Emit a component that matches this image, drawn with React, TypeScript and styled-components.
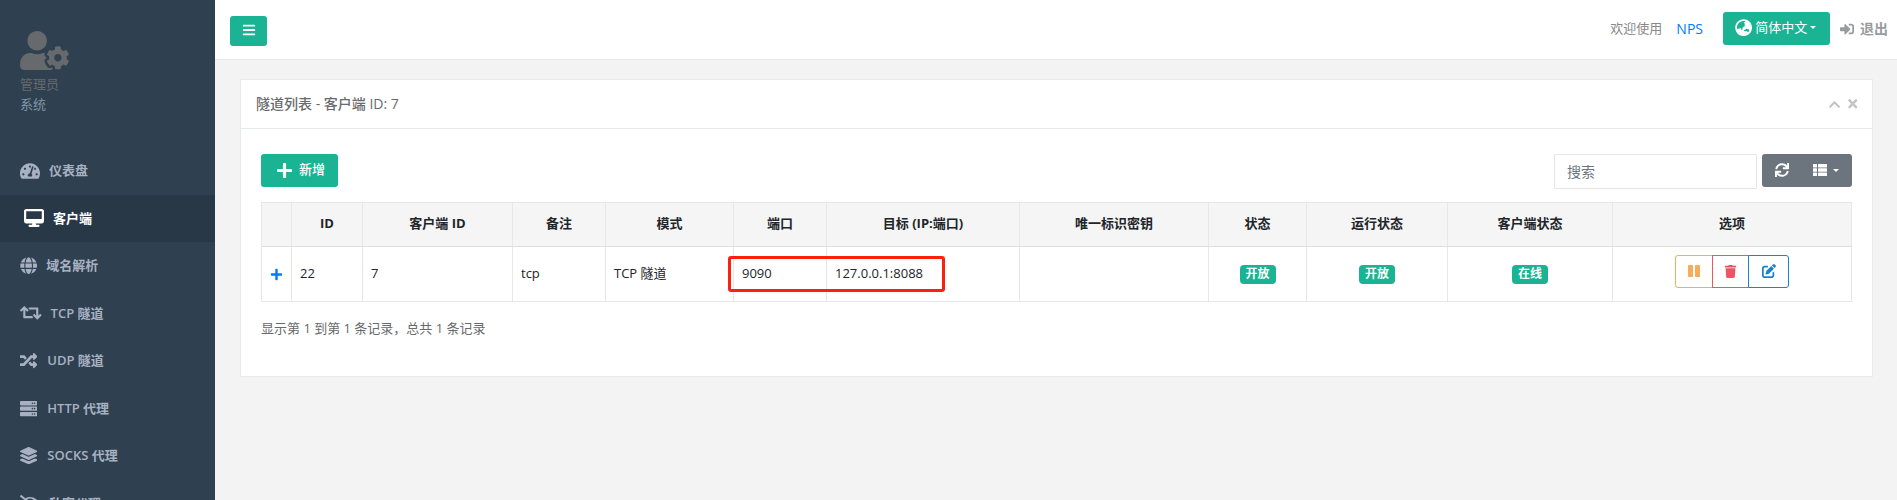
import React from 'react';
import styled, { createGlobalStyle } from 'styled-components';
import {
  FaUserCog, FaTachometerAlt, FaGlobe, FaRetweet, FaRandom, FaServer, FaLayerGroup,
  FaEyeSlash, FaBars, FaGlobeAsia, FaSignInAlt, FaSync, FaTrash,
  FaPlus, FaChevronUp, FaTimes,
} from 'react-icons/fa';
import { FaDesktop, FaPenToSquare } from 'react-icons/fa6';

const Global = createGlobalStyle`
  *, *::before, *::after { box-sizing: border-box; }
  html, body { margin: 0; height: 500px; overflow: hidden; }
  body {
    font-family: "Open Sans", "Noto Sans CJK SC", sans-serif;
    font-size: 13px;
    line-height: 19.5px;
    color: #676a6c;
    background: #f3f3f3;
  }
  svg { display: block; flex: none; }
`;

const Page = styled.div`
  display: flex;
  height: 500px;
  overflow: hidden;
`;

const Sidebar = styled.nav`
  width: 215px;
  flex: none;
  background: #2f4050;
  overflow: hidden;
`;

const Profile = styled.div`
  height: 147px;
  padding: 31px 20px 0;
  color: #676a6c;
`;

const ProfileName = styled.div`
  margin-top: 5px;
`;

const ProfileRole = styled.div`
  color: #8095a8;
`;

const MenuItem = styled.a<{ $active?: boolean }>`
  display: flex;
  align-items: center;
  height: 47.5px;
  padding-left: ${p => (p.$active ? 24 : 20)}px;
  font-weight: 600;
  color: ${p => (p.$active ? '#fff' : '#a7b1c2')};
  background: ${p => (p.$active ? '#293846' : 'transparent')};
`;

const MenuLabel = styled.span<{ $gap: number }>`
  margin-left: ${p => p.$gap}px;
`;

const Main = styled.main`
  flex: 1;
  min-width: 0;
`;

const TopBar = styled.header`
  display: flex;
  justify-content: space-between;
  height: 60px;
  padding: 0 9px 0 15px;
  background: #fff;
  border-bottom: 1px solid #e7eaec;
`;

const MenuToggle = styled.button`
  display: flex;
  justify-content: center;
  width: 37px;
  height: 30px;
  margin: 16px 0 0;
  padding: 7px 0 0;
  border: 0;
  border-radius: 3px;
  color: #fff;
  background: #1ab394;
`;

const TopRight = styled.div`
  display: flex;
  align-items: flex-start;
`;

const Welcome = styled.span`
  margin-top: 19px;
  color: #888;
`;

const Brand = styled.a`
  margin: 19px 20px 0 14px;
  font-size: 14px;
  color: #007bff;
`;

const LanguageButton = styled.button`
  display: flex;
  align-items: center;
  width: 107px;
  height: 33px;
  margin: 12px 10px 0 0;
  padding: 0 0 2px 12px;
  border: 0;
  border-radius: 3px;
  font: inherit;
  color: #fff;
  background: #1ab394;
`;

const LanguageName = styled.span`
  margin: 0 3px;
`;

const Caret = styled.span`
  border: 3px solid transparent;
  border-top-color: currentColor;
  border-bottom: 0;
`;

const Logout = styled.a`
  display: flex;
  align-items: center;
  gap: 6px;
  margin-top: 19px;
  font-size: 14px;
  font-weight: 600;
  color: #999c9e;
`;

const Panel = styled.section`
  height: 298px;
  margin: 19px 24px 0 25px;
  border: 1px solid #e7eaec;
  background: #fff;
`;

const PanelHead = styled.div`
  display: flex;
  align-items: center;
  justify-content: space-between;
  height: 49px;
  padding: 0 13px 0 15px;
  border-bottom: 1px solid #e7eaec;
  font-size: 14px;
  font-weight: 500;
`;

const PanelTools = styled.div`
  display: flex;
  align-items: center;
  gap: 5px;
  color: #c4c4c4;
`;

const PanelBody = styled.div`
  padding: 25px 20px 0;
`;

const Toolbar = styled.div`
  display: flex;
  justify-content: space-between;
  height: 48px;
`;

const AddButton = styled.button`
  display: flex;
  align-items: center;
  gap: 6px;
  width: 77px;
  height: 33px;
  padding: 0 0 1px 15px;
  border: 0;
  border-radius: 3px;
  font: inherit;
  font-weight: 500;
  color: #fff;
  background: #1ab394;
`;

const ToolbarRight = styled.div`
  display: flex;
  gap: 5px;
`;

const Search = styled.input`
  width: 203px;
  height: 35px;
  padding: 0 12px;
  border: 1px solid #e5e6e7;
  border-radius: 1px;
  font: inherit;
  font-size: 14px;
  &::placeholder { color: #6c757d; opacity: 1; }
`;

const ToolButtons = styled.div`
  display: flex;
  align-items: center;
  width: 90px;
  height: 33px;
  padding: 0 13px 1px;
  border-radius: 3px;
  color: #fff;
  background: #6c757d;
`;

const ColumnsToggle = styled.span`
  display: flex;
  align-items: center;
  gap: 6px;
  margin-left: 24px;
`;

const TableWrap = styled.div`
  position: relative;
`;

const Table = styled.table`
  width: 1591px;
  table-layout: fixed;
  border-collapse: separate;
  border-spacing: 0;
  border: 1px solid #e7e7e7;
  border-width: 1px 0 0 1px;
  color: #212529;
`;

const HeadCell = styled.th`
  height: 44px;
  padding: 0 0 1px;
  border-right: 1px solid #e7e7e7;
  border-bottom: 1px solid #ddd;
  background: #f5f5f6;
  text-align: center;
  font-weight: 700;
`;

const Cell = styled.td<{ $center?: boolean }>`
  height: 55px;
  padding: ${p => (p.$center ? '0' : '0 8px')};
  border-right: 1px solid #e7e7e7;
  border-bottom: 1px solid #e7e7e7;
  vertical-align: middle;
  text-align: ${p => (p.$center ? 'center' : 'left')};
`;

const ExpandLink = styled.a`
  display: flex;
  justify-content: center;
  padding-right: 1px;
  color: #007bff;
`;

const Badge = styled.span`
  display: inline-block;
  width: 36px;
  height: 19px;
  border-radius: 4px;
  font-size: 12px;
  line-height: 17px;
  font-weight: 700;
  color: #fff;
  background: #1ab394;
  vertical-align: middle;
`;

const Actions = styled.div`
  display: flex;
  justify-content: center;
  margin: 0 0 5px 1px;
`;

const ActionButton = styled.button<{ $color: string; $width: number }>`
  display: flex;
  align-items: center;
  justify-content: center;
  width: ${p => p.$width}px;
  height: 33px;
  margin-left: -1px;
  padding: 0 0 1px;
  border: 1px solid ${p => p.$color};
  color: ${p => p.$color};
  background: #fff;
  &:first-child { border-radius: 3px 0 0 3px; }
  &:last-child { border-radius: 0 3px 3px 0; }
`;

const Highlight = styled.div`
  position: absolute;
  left: 467px;
  top: 54px;
  width: 217px;
  height: 36px;
  border: 3px solid #ff1f0f;
  border-radius: 3px;
`;

const Summary = styled.div`
  margin-top: 17px;
`;

const PauseIcon = () => (
  <svg width="12" height="12" viewBox="0 0 12 12" fill="currentColor">
    <rect width="5" height="12" rx="0.8" />
    <rect x="7" width="5" height="12" rx="0.8" />
  </svg>
);

const ListIcon = () => (
  <svg width="14" height="12" viewBox="0 0 14 12" fill="currentColor">
    {[0, 4.3, 8.6].map(y => (
      <React.Fragment key={y}>
        <rect y={y} width="4" height="3.4" rx="0.5" />
        <rect x="5" y={y} width="9" height="3.4" rx="0.5" />
      </React.Fragment>
    ))}
  </svg>
);

const menu = [
  { label: '仪表盘', icon: FaTachometerAlt, size: 20, gap: 9 },
  { label: '客户端', icon: FaDesktop, size: 20, gap: 9, active: true },
  { label: '域名解析', icon: FaGlobe, size: 17.3, gap: 9 },
  { label: 'TCP 隧道', icon: FaRetweet, size: 21.6, gap: 9 },
  { label: 'UDP 隧道', icon: FaRandom, size: 17.3, gap: 10 },
  { label: 'HTTP 代理', icon: FaServer, size: 17.3, gap: 10 },
  { label: 'SOCKS 代理', icon: FaLayerGroup, size: 17.3, gap: 10 },
  { label: '私密代理', icon: FaEyeSlash, size: 20, gap: 9 },
];

const columns: [string, number][] = [
  ['', 30], ['ID', 71], ['客户端 ID', 150], ['备注', 93], ['模式', 128], ['端口', 93],
  ['目标 (IP:端口)', 193], ['唯一标识密钥', 189], ['状态', 98], ['运行状态', 141],
  ['客户端状态', 165], ['选项', 239],
];

export default function App() {
  return (
    <Page>
      <Global />
      <Sidebar>
        <Profile>
          <FaUserCog style={{ width: 49, height: 39 }} />
          <ProfileName>管理员</ProfileName>
          <ProfileRole>系统</ProfileRole>
        </Profile>
        {menu.map(({ label, icon: Icon, size, gap, active }) => (
          <MenuItem key={label} $active={active}>
            <Icon size={size} />
            <MenuLabel $gap={gap}>{label}</MenuLabel>
          </MenuItem>
        ))}
      </Sidebar>
      <Main>
        <TopBar>
          <MenuToggle><FaBars size={14} /></MenuToggle>
          <TopRight>
            <Welcome>欢迎使用</Welcome>
            <Brand>NPS</Brand>
            <LanguageButton>
              <FaGlobeAsia size={17.3} />
              <LanguageName>简体中文</LanguageName>
              <Caret />
            </LanguageButton>
            <Logout><FaSignInAlt size={14} />退出</Logout>
          </TopRight>
        </TopBar>
        <Panel>
          <PanelHead>
            隧道列表 - 客户端 ID: 7
            <PanelTools><FaChevronUp size={13} /><FaTimes size={13.5} /></PanelTools>
          </PanelHead>
          <PanelBody>
            <Toolbar>
              <AddButton><FaPlus size={17} />新增</AddButton>
              <ToolbarRight>
                <Search placeholder="搜索" />
                <ToolButtons>
                  <FaSync size={14} />
                  <ColumnsToggle><ListIcon /><Caret /></ColumnsToggle>
                </ToolButtons>
              </ToolbarRight>
            </Toolbar>
            <TableWrap>
              <Table>
                <colgroup>
                  {columns.map(([name, width]) => <col key={name} style={{ width }} />)}
                </colgroup>
                <thead>
                  <tr>{columns.map(([name]) => <HeadCell key={name}>{name}</HeadCell>)}</tr>
                </thead>
                <tbody>
                  <tr>
                    <Cell $center><ExpandLink><FaPlus size={13} /></ExpandLink></Cell>
                    <Cell>22</Cell>
                    <Cell>7</Cell>
                    <Cell>tcp</Cell>
                    <Cell>TCP 隧道</Cell>
                    <Cell>9090</Cell>
                    <Cell>127.0.0.1:8088</Cell>
                    <Cell />
                    <Cell $center><Badge>开放</Badge></Cell>
                    <Cell $center><Badge>开放</Badge></Cell>
                    <Cell $center><Badge>在线</Badge></Cell>
                    <Cell $center>
                      <Actions>
                        <ActionButton $color="#f8ac59" $width={38}><PauseIcon /></ActionButton>
                        <ActionButton $color="#ed5565" $width={37}><FaTrash size={13} /></ActionButton>
                        <ActionButton $color="#1c84c6" $width={41}><FaPenToSquare size={14} /></ActionButton>
                      </Actions>
                    </Cell>
                  </tr>
                </tbody>
              </Table>
              <Highlight />
            </TableWrap>
            <Summary>显示第 1 到第 1 条记录，总共 1 条记录</Summary>
          </PanelBody>
        </Panel>
      </Main>
    </Page>
  );
}
